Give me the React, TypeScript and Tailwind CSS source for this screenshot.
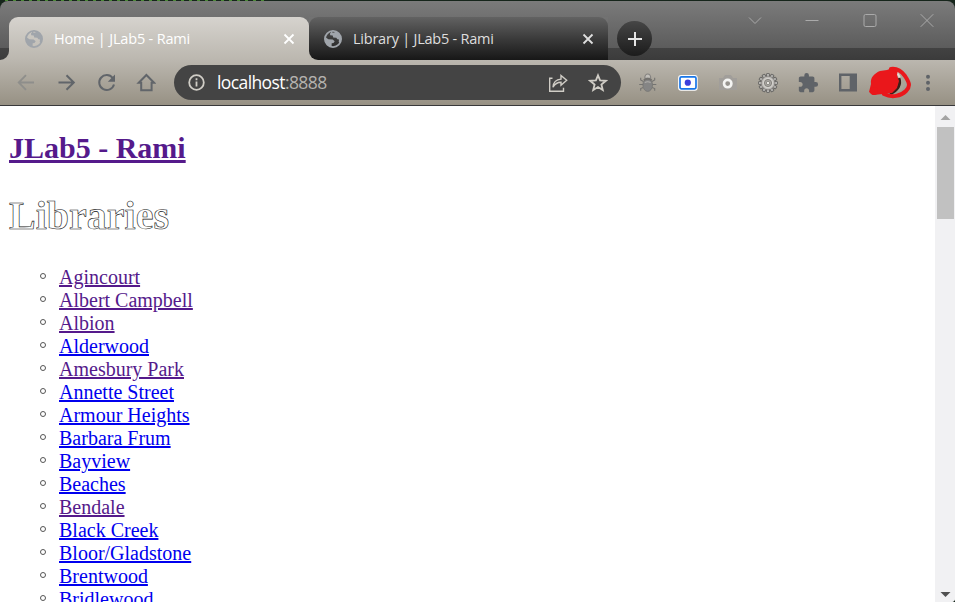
import React from "react";

type Library = { name: string; visited?: boolean };

const libraries: Library[] = [
  { name: "Agincourt", visited: true },
  { name: "Albert Campbell", visited: true },
  { name: "Albion", visited: true },
  { name: "Alderwood" },
  { name: "Amesbury Park", visited: true },
  { name: "Annette Street" },
  { name: "Armour Heights" },
  { name: "Barbara Frum" },
  { name: "Bayview" },
  { name: "Beaches" },
  { name: "Bendale", visited: true },
  { name: "Black Creek" },
  { name: "Bloor/Gladstone" },
  { name: "Brentwood" },
  { name: "Bridlewood" },
];

function Globe({ className }: { className: string }) {
  return (
    <svg viewBox="0 0 18 18" className={`h-[18px] w-[18px] shrink-0 ${className}`}>
      <circle cx="9" cy="9" r="8.1" fill="none" stroke="currentColor" strokeWidth="1.8" />
      <path
        fill="currentColor"
        d="M1 7 4.4 9.2 8.7 9.4 10.7 11.2 9.5 13 7.7 13.2 7.5 17C3.5 16.5.4 13 1 7ZM8 1 6 3.5 6.2 5.2 8.7 5.4 9.2 7.4 12.3 7.7 13.4 9.3 15 9.4 14.7 12 16.2 13.2C18.3 8 16 2.2 11 1l-.5 1.5-2 .2Z"
      />
    </svg>
  );
}

function CloseX() {
  return (
    <svg viewBox="0 0 12 12" className="h-3 w-3 shrink-0" fill="none" stroke="currentColor" strokeWidth="1.8">
      <path d="M1.5 1.5 10.5 10.5M10.5 1.5 1.5 10.5" />
    </svg>
  );
}

function TabStrip() {
  return (
    <div className="flex h-[59px] shrink-0 rounded-t-lg bg-[linear-gradient(180deg,#7b7b7b_0px,#5c5c5c_47px,#424242_47px,#3b3b3b_59px)] pl-[9px]">
      <div className="relative mt-4 flex h-[43px] w-[300px] shrink-0 items-center rounded-t-[9px] bg-linear-to-b from-[#d6d3ce] to-[#bbb7af] pr-[14px] pl-4 text-white">
        <svg viewBox="0 0 9 9" className="absolute bottom-0 -left-[9px] h-[9px] w-[9px]">
          <path fill="#bbb7af" d="M9 0v9H0a9 9 0 0 0 9-9Z" />
        </svg>
        <Globe className="text-[#a0a5ab]" />
        <span className="ml-[11px] flex-1 text-[14.5px] tracking-[-0.18px] whitespace-nowrap">Home | JLab5 - Rami</span>
        <CloseX />
      </div>
      <div className="mt-4 flex h-[43px] w-[299px] shrink-0 bg-[linear-gradient(180deg,#727272_0px,#666666_26px,#bbb7af_26px)]">
        <div className="flex h-full w-full items-center rounded-t-[9px] rounded-bl-[9px] bg-[linear-gradient(180deg,#626262,#3b3b3b_50%,#171717)] pr-[14px] pl-[15px] text-[#dedede]">
          <Globe className="text-[#a0a5ab]" />
          <span className="ml-[11px] flex-1 text-[14.5px] tracking-[-0.23px] whitespace-nowrap">Library | JLab5 - Rami</span>
          <CloseX />
        </div>
      </div>
      <div className="mt-[20px] ml-[9px] flex h-[35px] w-[35px] shrink-0 items-center justify-center rounded-full bg-linear-to-b from-[#464646] to-[#1c1c1c]">
        <svg viewBox="0 0 16 16" className="h-4 w-4" stroke="#e4e4e4" strokeWidth="2">
          <path d="M8 1v14M1 8h14" />
        </svg>
      </div>
      <div className="mt-3 mr-[21px] ml-auto flex h-[14px] w-[186px] items-center justify-between text-[#aaa]">
        <svg viewBox="0 0 14 14" className="h-[14px] w-[14px]" fill="none" stroke="currentColor">
          <path d="m1 4.5 6 6 6-6" />
        </svg>
        <svg viewBox="0 0 14 14" className="h-[14px] w-[14px]" fill="none" stroke="currentColor">
          <path d="M.5 7.5h13" />
        </svg>
        <svg viewBox="0 0 14 14" className="h-[14px] w-[14px]" fill="none" stroke="currentColor">
          <rect x="1" y="1.5" width="12" height="12" rx="1.5" />
        </svg>
        <svg viewBox="0 0 14 14" className="h-[14px] w-[14px]" fill="none" stroke="currentColor">
          <path d="m.7 1.2 12.6 12.6M13.3 1.2.7 13.8" />
        </svg>
      </div>
    </div>
  );
}

const gearTeeth = [0, 30, 60, 90, 120, 150, 180, 210, 240, 270, 300, 330];

function Toolbar() {
  return (
    <div className="flex h-[46px] shrink-0 items-center border-b border-[#38383a] bg-linear-to-b from-[#bbb7af] to-[#979184] pl-4">
      <div className="flex w-[158px] shrink-0 gap-5 text-[#61656a]">
        <svg viewBox="0 0 20 20" className="h-5 w-5 text-[#8e8e8b]" fill="none" stroke="currentColor" strokeWidth="1.8">
          <path d="M18 9.5H3M10 2.2 2.7 9.5l7.3 7.3" />
        </svg>
        <svg viewBox="0 0 20 20" className="h-5 w-5" fill="none" stroke="currentColor" strokeWidth="2">
          <path d="M2.5 9.5h15M10.5 2.2 17.8 9.5l-7.3 7.3" />
        </svg>
        <svg viewBox="0 0 20 20" className="h-5 w-5" fill="none" stroke="currentColor" strokeWidth="2">
          <path d="M16.7 5A7.5 7.5 0 1 0 18 11.5" />
          <path d="M19 1.5v7.2h-7.2Z" fill="currentColor" stroke="none" />
        </svg>
        <svg viewBox="0 0 20 20" className="h-5 w-5" fill="none" stroke="currentColor" strokeWidth="2">
          <path d="M2.7 9.8h2.5v7.4h10.4V9.8h2.5L10.4 2Z" />
        </svg>
      </div>
      <div className="flex h-[35px] w-[447px] shrink-0 items-center rounded-full bg-[#444444] pr-[13px] pl-[14px] text-[#d0cdc6]">
        <svg viewBox="0 0 17 17" className="h-[17px] w-[17px]" fill="none" stroke="currentColor" strokeWidth="1.8">
          <circle cx="8.5" cy="8.5" r="7.3" />
          <path d="M8.5 7.6v5M8.5 4.3v2" />
        </svg>
        <span className="ml-3 flex-1 text-[17.5px] tracking-[-0.6px]">
          <span className="text-white">localhost</span>
          <span className="text-[#b5b3af]">:8888</span>
        </span>
        <svg viewBox="0 0 20 20" className="mr-5 h-5 w-5" fill="none" stroke="currentColor" strokeWidth="1.4">
          <path d="M4.5 5.3H1.7v12.9h13.8v-3.5M5 14.2c.4-5.2 3.3-7.8 8-8.1V2.4l5.7 4.9-5.7 5V9.2C9.5 9.2 6.8 11 5 14.2Z" />
        </svg>
        <svg viewBox="0 0 20 20" className="h-5 w-5" fill="none" stroke="currentColor" strokeWidth="1.8">
          <path d="m10 2.3 2.1 5.1 5.7.4-4.4 3.7 1.4 5.5-4.8-2.9-4.8 2.9 1.4-5.5-4.4-3.7 5.7-.4Z" />
        </svg>
      </div>
      <div className="ml-[17px] flex shrink-0 gap-5">
        <svg viewBox="0 0 20 20" className="h-5 w-5" fill="none" stroke="#747371" strokeWidth="1.1">
          <path d="M5.4 8.5 2.7 7V4.8M14 8.5 16.7 7V4.8M5 11.5H1.2M14.5 11.5h3.8M5.2 14.5l-2.5 1v2.3M14.2 14.5l2.5 1v2.3" />
          <path d="M6.8 5.3C6.5-.5 13-.5 12.7 5.3Z" fill="#c2bfba" stroke="#858380" />
          <ellipse cx="9.7" cy="12" rx="4.8" ry="6.4" fill="#858585" stroke="#747371" strokeWidth=".8" />
          <path d="M5.8 7.2q4-2.8 7.9 0" stroke="#73716e" strokeWidth="2" />
          <path d="M6.8 9.6q2.9-1.6 5.8 0" stroke="#b1afac" />
        </svg>
        <svg viewBox="0 0 20 20" className="h-5 w-5" overflow="visible">
          <rect x=".1" y="2" width="19.6" height="15.7" rx="3" fill="white" />
          <rect x="2" y="3.8" width="16" height="12" rx="1.5" fill="white" stroke="#1976e8" strokeWidth="1.7" />
          <circle cx="9.8" cy="9.7" r="3.1" fill="#3c3fdc" />
        </svg>
        <svg viewBox="0 0 20 20" className="h-5 w-5" fill="none">
          <path d="M1 5h4l2-3h6l2 3h4v12H1Z" fill="#a19e9a" />
          <circle cx="9.7" cy="10.6" r="3.7" fill="#96938f" stroke="#f4f4f3" strokeWidth="2.6" />
        </svg>
        <svg viewBox="0 0 20 20" className="h-5 w-5">
          {gearTeeth.map((angle) => (
            <rect key={angle} x="8.5" y=".5" width="3" height="5" rx=".6" fill="#b5b4b1" stroke="#666563" strokeWidth=".9" transform={`rotate(${angle} 10 10)`} />
          ))}
          <circle cx="10" cy="10" r="6.8" fill="#bbb9b5" stroke="#7c7a77" strokeWidth=".7" />
          <circle cx="10" cy="10" r="5.2" fill="#d2d0cc" />
          <circle cx="10" cy="10" r="3.6" fill="#a9a7a3" stroke="#777570" strokeWidth=".8" />
          <circle cx="10" cy="10" r="1.7" fill="#e8e6e2" stroke="#777570" strokeWidth=".7" />
        </svg>
        <svg viewBox="0 0 24 24" className="-m-px h-[22px] w-[22px] text-[#5f6368]" fill="currentColor">
          <path d="M20.5 11H19V7c0-1.1-.9-2-2-2h-4V3.5a2.5 2.5 0 0 0-5 0V5H4c-1.1 0-2 .9-2 2v3.8h1.5c1.5 0 2.7 1.2 2.7 2.7s-1.2 2.7-2.7 2.7H2V20c0 1.1.9 2 2 2h3.8v-1.5c0-1.5 1.2-2.7 2.7-2.7s2.7 1.2 2.7 2.7V22H17c1.1 0 2-.9 2-2v-4h1.5a2.5 2.5 0 0 0 0-5Z" />
        </svg>
        <svg viewBox="0 0 20 20" className="h-5 w-5">
          <path fillRule="evenodd" fill="#5f6368" d="M1 .5h18v18H1ZM3.4 3v13h8.3V3Z" />
        </svg>
      </div>
      <svg viewBox="0 0 44 34" className="ml-[11px] h-[34px] w-11 shrink-0">
        <path d="M28 6c6 7 5 15-5 21l10-3 4-8-4-8Z" fill="#aaa698" />
        <path d="M27 6q5 5 4 9" fill="none" stroke="#e7dcd3" strokeWidth="2" />
        <path d="M30 12q3 10-9 16" fill="none" stroke="#392019" strokeWidth="3" />
        <path fill="#ea171b" d="M2 18C1 11 6 7 11 5l7-1 5-2 6 2-1 5 2 6-2 7-5 5-9 1-10 1-4-3Z" />
        <path d="M22 3c7-1 11 3 14 7 4 6 6 10 1 15-5 5-14 7-22 3" fill="none" stroke="#ea171b" strokeWidth="4" strokeLinecap="round" />
        <circle cx="5" cy="25" r="4" fill="#ea171b" />
      </svg>
      <svg viewBox="0 0 6 18" className="ml-3 h-[18px] w-[6px]" fill="#5f6368">
        <circle cx="3" cy="2.7" r="2" />
        <circle cx="3" cy="8.8" r="2" />
        <circle cx="3" cy="15" r="2" />
      </svg>
    </div>
  );
}

export default function App() {
  return (
    <div className="flex h-[602px] w-[955px] flex-col overflow-hidden bg-[#16251b] font-['Open_Sans','Noto_Sans',sans-serif]">
      <div className="h-px w-[265px] shrink-0 bg-[repeating-linear-gradient(90deg,#16251b_0px,#16251b_5px,#4b8a36_5px,#4b8a36_8px)]" />
      <TabStrip />
      <Toolbar />
      <div className="flex min-h-0 flex-1 overflow-hidden rounded-br-[4px] bg-white">
        <main className="min-w-0 flex-1 pl-[9px] font-['Liberation_Serif',serif] text-[20px] leading-[23px]">
          <h2 className="mt-[25px] text-[30px] leading-[34px] font-bold text-[#551a8b]">
            <a className="underline">JLab5 - Rami</a>
          </h2>
          <h1 className="mt-[28px] text-[40px] leading-[46px] font-bold text-white [-webkit-text-stroke:0.6px_#111]">Libraries</h1>
          <ul className="mt-[27px]">
            {libraries.map(({ name, visited }) => (
              <li key={name} className="flex h-[23px] items-center pl-[31px]">
                <span className="mr-[13px] mb-[3px] h-[6px] w-[6px] rounded-full border border-[#555]" />
                <a className={visited ? "text-[#551a8b] underline" : "text-[#0000ee] underline"}>{name}</a>
              </li>
            ))}
          </ul>
        </main>
        <div className="flex w-5 shrink-0 flex-col items-center bg-[#f1f1f3]">
          <svg viewBox="0 0 20 21" className="h-[21px] w-5">
            <path d="m5.5 14 5-5 5 5Z" fill="#a3a3a3" />
          </svg>
          <div className="ml-px h-[92px] w-[17px] bg-[#c1c1c1]" />
          <svg viewBox="0 0 20 20" className="mt-auto mb-[-1px] h-5 w-5">
            <path d="m5.5 9 5 5 5-5Z" fill="#505050" />
          </svg>
        </div>
      </div>
    </div>
  );
}
